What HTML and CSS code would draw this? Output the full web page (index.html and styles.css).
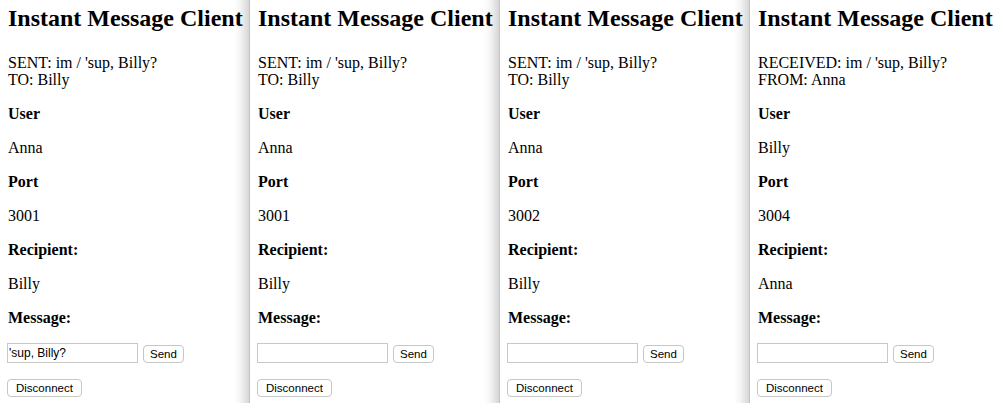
FILE: index.html
```html
<!DOCTYPE html>
<html>
<head>
<meta charset="utf-8">
<link rel="stylesheet" href="styles.css">
</head>
<body>
<div class="clients">
  <section class="panel">
    <h1>Instant Message Client</h1>
    <p class="status">SENT: im / 'sup, Billy?<br>TO: Billy</p>
    <p><b>User</b></p>
    <p>Anna</p>
    <p><b>Port</b></p>
    <p>3001</p>
    <p><b>Recipient:</b></p>
    <p>Billy</p>
    <p><b>Message:</b></p>
    <p class="row"><input class="msg" type="text" value="'sup, Billy?"><button class="btn btn-send">Send</button></p>
    <p class="row"><button class="btn">Disconnect</button></p>
  </section>
  <section class="panel">
    <h1>Instant Message Client</h1>
    <p class="status">SENT: im / 'sup, Billy?<br>TO: Billy</p>
    <p><b>User</b></p>
    <p>Anna</p>
    <p><b>Port</b></p>
    <p>3001</p>
    <p><b>Recipient:</b></p>
    <p>Billy</p>
    <p><b>Message:</b></p>
    <p class="row"><input class="msg" type="text" value=""><button class="btn btn-send">Send</button></p>
    <p class="row"><button class="btn">Disconnect</button></p>
  </section>
  <section class="panel">
    <h1>Instant Message Client</h1>
    <p class="status">SENT: im / 'sup, Billy?<br>TO: Billy</p>
    <p><b>User</b></p>
    <p>Anna</p>
    <p><b>Port</b></p>
    <p>3002</p>
    <p><b>Recipient:</b></p>
    <p>Billy</p>
    <p><b>Message:</b></p>
    <p class="row"><input class="msg" type="text" value=""><button class="btn btn-send">Send</button></p>
    <p class="row"><button class="btn">Disconnect</button></p>
  </section>
  <section class="panel">
    <h1>Instant Message Client</h1>
    <p class="status">RECEIVED: im / 'sup, Billy?<br>FROM: Anna</p>
    <p><b>User</b></p>
    <p>Billy</p>
    <p><b>Port</b></p>
    <p>3004</p>
    <p><b>Recipient:</b></p>
    <p>Anna</p>
    <p><b>Message:</b></p>
    <p class="row"><input class="msg" type="text" value=""><button class="btn btn-send">Send</button></p>
    <p class="row"><button class="btn">Disconnect</button></p>
  </section>
</div>
</body>
</html>
```
FILE: styles.css
```css
html, body {
  margin: 0;
  padding: 0;
  background: #fff;
}
body {
  font-family: "Liberation Serif", "Times New Roman", serif;
  font-size: 16px;
  color: #000;
  overflow: hidden;
}
.clients {
  display: flex;
  height: 403px;
}
.panel {
  flex: none;
  width: 250px;
  box-sizing: border-box;
  padding: 0 8px;
  position: relative;
  background: #fff;
  white-space: nowrap;
}
.panel + .panel::before {
  content: "";
  position: absolute;
  top: 0;
  bottom: 0;
  left: -16px;
  width: 15px;
  border-right: 1px solid #c4c4c4;
  background: linear-gradient(to right, rgba(0,0,0,0), rgba(0,0,0,0.04) 40%, rgba(0,0,0,0.16));
}
h1 {
  font-size: 24px;
  font-weight: bold;
  margin: 0;
  padding-top: 5px;
  margin-bottom: 22px;
  line-height: 27px;
}
p {
  margin: 16px 0;
  line-height: 18px;
}
.status {
  margin-top: 0;
  margin-bottom: 17px;
  line-height: 17px;
}
.row {
  display: flex;
  align-items: flex-end;
  gap: 5px;
}
.msg {
  box-sizing: border-box;
  width: 131px;
  height: 20px;
  margin: 0 0 0 -1px;
  padding: 0 1px;
  border: 1px solid #c8c8c8;
  font-family: "Liberation Sans", Arial, sans-serif;
  font-size: 12px;
  color: #000;
  background: #fff;
}
.btn {
  box-sizing: border-box;
  height: 18px;
  padding: 0 8px;
  margin: 0;
  border: 1px solid #c6c6c6;
  border-radius: 4px;
  background: #fff;
  font-family: "Liberation Sans", Arial, sans-serif;
  font-size: 11.5px;
  line-height: 16px;
  color: #000;
}
.btn-send {
  padding: 0 6px;
}
.row + .row .btn {
  margin-left: -1px;
}
```
